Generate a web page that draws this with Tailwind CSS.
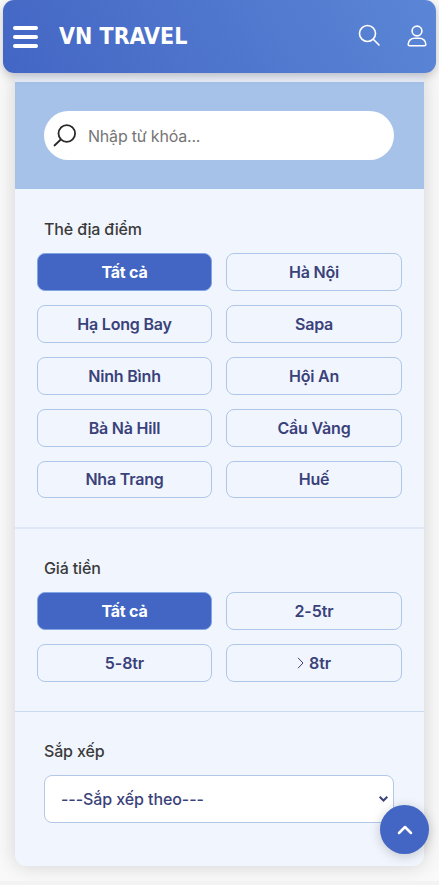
<!DOCTYPE html>
<html lang="vi">
<head>
<meta charset="utf-8">
<title>VN Travel</title>
<script src="https://cdn.jsdelivr.net/npm/@tailwindcss/browser@4"></script>
</head>
<body class="relative h-[885px] overflow-hidden bg-[#f9f9f9] font-['Inter',sans-serif] text-base font-medium tracking-[-0.15px] text-[#3a427a]">
<header class="relative z-10 mx-[3px] flex h-[73px] items-center rounded-[11px] bg-linear-[60deg,#4366c4,#5b86d6] pl-[10px] pr-[9px] text-white shadow-[0_3px_10px_rgba(0,0,0,0.22)]">
  <button class="flex w-[25px] flex-col gap-[5px]" aria-label="Menu"><span class="h-1 rounded-full bg-white"></span><span class="h-1 rounded-full bg-white"></span><span class="h-1 rounded-full bg-white"></span></button>
  <div class="ml-[21px] font-['DejaVu_Sans_Condensed','DejaVu_Sans',sans-serif] text-[23px] font-bold [font-stretch:condensed] tracking-[0px]">VN TRAVEL</div>
  <svg class="relative -top-[2px] ml-auto" width="22" height="22" viewBox="0 0 22 22" fill="none" stroke="currentColor" stroke-width="1.6" stroke-linecap="round"><circle cx="9.500" cy="9.500" r="8"/><path d="M15.300 15.300L21 21"/></svg>
  <svg class="relative -top-[1px] ml-[27px]" width="20" height="22" viewBox="0 0 20 22" fill="none" stroke="currentColor" stroke-width="1.6"><circle cx="10" cy="6" r="4.9"/><path d="M1.2 19.2C1.2 15.500 4.200 13.200 7.500 13.200H12.500C15.800 13.200 18.800 15.500 18.800 19.200Q18.800 20.800 17.500 20.800H2.500Q1.200 20.800 1.200 19.200Z"/></svg>
</header>
<main class="mx-[15px] h-[793px] rounded-b-[11px] bg-[#f1f5fd] shadow-[0_0_20px_rgba(0,0,0,0.16)]">
  <section class="border-t-[9px] border-[#e9eef9]">
    <div class="h-[107px] bg-[#a6c2e9] px-[29px] pt-[29px]">
      <label class="flex h-[49px] w-[350px] items-center rounded-full bg-white pl-[9px]">
        <svg class="relative -top-[1px]" width="24" height="24" viewBox="0 0 24 24" fill="none" stroke="#292929" stroke-width="1.8" stroke-linecap="round"><circle cx="13.800" cy="10.500" r="8.300"/><path d="M7.800 16.500L1.500 22.500"/></svg>
        <input class="ml-[11px] w-[280px] font-normal tracking-[-0.2px] outline-none placeholder:text-[#757575]" placeholder="Nhập từ khóa...">
      </label>
    </div>
  </section>
  <section class="h-[340px] border-b-2 border-[#e0e8f7] px-[22px] pt-[28px]">
    <h2 class="ml-[7px] h-[36px] leading-6 text-[#3b3b3b]">Thẻ địa điểm</h2>
    <div class="grid grid-cols-[175px_176px] auto-rows-[38px] gap-[14px] font-semibold tracking-[-0.2px]">
      <button class="rounded-lg border border-[#82a5e4] bg-[#4366c4] font-bold text-white">Tất cả</button>
      <button class="rounded-lg border border-[#aec7e9]">Hà Nội</button>
      <button class="rounded-lg border border-[#aec7e9]">Hạ Long Bay</button>
      <button class="rounded-lg border border-[#aec7e9]">Sapa</button>
      <button class="rounded-lg border border-[#aec7e9]">Ninh Bình</button>
      <button class="rounded-lg border border-[#aec7e9]">Hội An</button>
      <button class="rounded-lg border border-[#aec7e9]">Bà Nà Hill</button>
      <button class="rounded-lg border border-[#aec7e9]">Cầu Vàng</button>
      <button class="h-[37px] rounded-lg border border-[#aec7e9] pb-px">Nha Trang</button>
      <button class="h-[37px] rounded-lg border border-[#aec7e9] pb-px">Huế</button>
    </div>
  </section>
  <section class="h-[183px] border-b border-[#ccdaef] px-[22px] pt-[27px]">
    <h2 class="ml-[7px] h-[36px] leading-6 text-[#3b3b3b]">Giá tiền</h2>
    <div class="grid grid-cols-[175px_176px] auto-rows-[38px] gap-[14px] font-semibold tracking-[-0.1px]">
      <button class="rounded-lg border border-[#82a5e4] bg-[#4366c4] font-bold tracking-[-0.2px] text-white">Tất cả</button>
      <button class="rounded-lg border border-[#aec7e9]">2-5tr</button>
      <button class="rounded-lg border border-[#aec7e9]">5-8tr</button>
      <button class="flex items-center justify-center gap-[5px] rounded-lg border border-[#aec7e9]"><svg width="7" height="12" viewBox="0 0 7 12" fill="none" stroke="currentColor"><path d="M1 .8L6 6L1 11.200"/></svg>8tr</button>
    </div>
  </section>
  <section class="px-[29px] pt-[27px]">
    <h2 class="h-[36px] leading-6 text-[#3b3b3b]">Sắp xếp</h2>
    <div class="flex h-[48px] w-[350px] items-center justify-between rounded-lg border border-[#b3c8e9] bg-white pl-4 pr-[5px]">
      <span class="tracking-[-0.08px]">---Sắp xếp theo---</span>
      <svg width="9" height="6" viewBox="0 0 9 6" fill="none" stroke="currentColor" stroke-width="2"><path d="M.7 .8L4.500 4.500L8.300 .8"/></svg>
    </div>
  </section>
</main>
<div class="mt-[15px] h-1 bg-[#f3f3f4]"></div>
<button class="absolute left-[380px] top-[805px] flex size-[49px] items-center justify-center rounded-full bg-[#4366c4] text-white shadow-[0_2px_12px_rgba(0,0,0,0.2)]" aria-label="Lên đầu trang"><svg width="16" height="10" viewBox="0 0 16 10" fill="none" stroke="currentColor" stroke-width="2.500" stroke-linecap="round" stroke-linejoin="round"><path d="M2 8L8 2L14 8"/></svg></button>
</body>
</html>
